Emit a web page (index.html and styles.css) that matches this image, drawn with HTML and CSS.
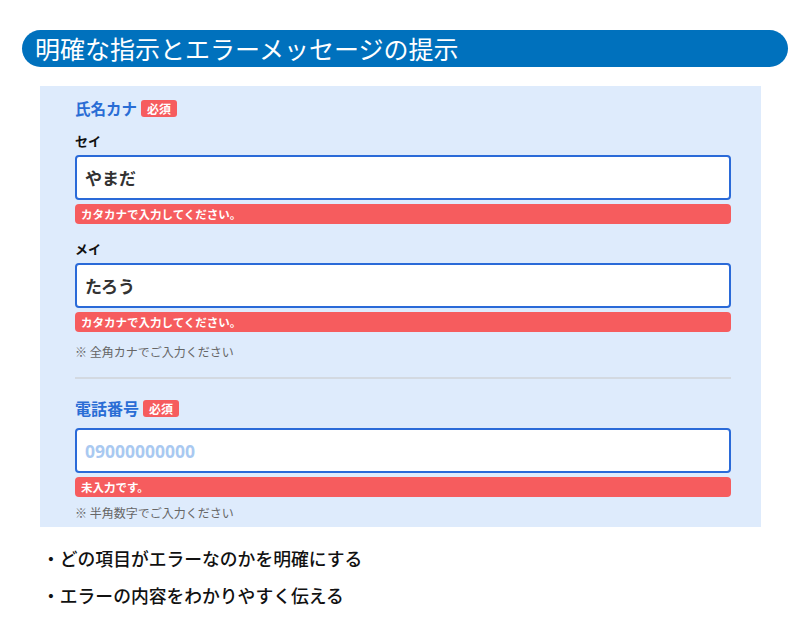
FILE: index.html
```html
<!DOCTYPE html>
<html lang="ja">

<head>
    <meta charset="UTF-8">
    <meta name="viewport" content="width=device-width, initial-scale=1.0">
    <title>明確な指示とエラーメッセージの提示</title>
    <link rel="stylesheet" href="styles.css">
</head>

<body>
    <h1 class="title">明確な指示とエラーメッセージの提示</h1>

    <div class="form-panel">
        <!-- 氏名カナ -->
        <div class="group-label">
            <span>氏名カナ</span>
            <span class="badge">必須</span>
        </div>

        <div class="sub-label first">セイ</div>
        <input class="field" type="text" value="やまだ" title="sei">
        <div class="error">カタカナで入力してください。</div>

        <div class="sub-label">メイ</div>
        <input class="field" type="text" value="たろう" title="mei">
        <div class="error">カタカナで入力してください。</div>

        <p class="note">※ 全角カナでご入力ください</p>

        <hr class="divider">

        <!-- 電話番号 -->
        <div class="group-label tel">
            <span>電話番号</span>
            <span class="badge">必須</span>
        </div>
        <input class="field num" type="text" placeholder="09000000000" title="tel">
        <div class="error">未入力です。</div>
        <p class="note last">※ 半角数字でご入力ください</p>
    </div>

    <ul class="points">
        <li>・どの項目がエラーなのかを明確にする</li>
        <li>・エラーの内容をわかりやすく伝える</li>
    </ul>
</body>

</html>
```

FILE: styles.css
```css
:root {
    font-family: 'Noto Sans CJK JP', 'Noto Sans', sans-serif;
}
body {
    margin: 0;
    background-color: #fff;
    color: #111;
}
.title {
    margin: 30px 13px 0 22px;
    height: 37px;
    padding-left: 13px;
    border-radius: 19px;
    background-color: #0071bd;
    color: #fff;
    font-size: 25px;
    font-weight: 400;
    line-height: 37px;
    white-space: nowrap;
}
.form-panel {
    width: 656px;
    margin: 19px 0 0 40px;
    padding: 12px 30px 4px 35px;
    background-color: #deebfc;
}
.group-label {
    display: flex;
    align-items: center;
    gap: 4px;
    height: 20px;
    color: #2a6dd5;
    font-size: 15.5px;
    font-weight: 700;
}
.group-label.tel {
    margin-top: 19px;
    font-size: 16px;
}
.badge {
    display: inline-block;
    height: 17px;
    padding: 0 6px;
    border-radius: 3px;
    background-color: #f65c5e;
    color: #fff;
    font-size: 12px;
    line-height: 17px;
}
.sub-label {
    margin-top: 15px;
    height: 20px;
    font-size: 13px;
    font-weight: 700;
    line-height: 20px;
}
.sub-label.first {
    margin-top: 13px;
}
.field {
    display: block;
    box-sizing: border-box;
    width: 100%;
    height: 45px;
    margin-top: 4px;
    padding: 0 8px;
    border: 2px solid #2a6ad8;
    border-radius: 4px;
    background-color: #fff;
    color: #333;
    font-family: inherit;
    font-size: 17px;
    font-weight: 700;
    outline: none;
}
.field.num {
    margin-top: 10px;
    font-family: 'Noto Sans', sans-serif;
    font-size: 17.5px;
}
.field::placeholder {
    color: #a9c9f1;
}
.error {
    height: 20px;
    margin-top: 4px;
    padding-left: 6px;
    border-radius: 4px;
    background-color: #f65c5e;
    color: #fff;
    font-size: 11.5px;
    font-weight: 700;
    line-height: 20px;
}
.note {
    margin: 10px 0 0;
    height: 20px;
    color: #666;
    font-size: 12px;
    line-height: 20px;
}
.note.last {
    margin-top: 6px;
}
.divider {
    margin: 15px 0 0;
    height: 2px;
    border: none;
    background-color: #d3d9e1;
}
.points {
    margin: 13px 0 0 42px;
    padding: 0;
    list-style: none;
    font-size: 17.8px;
    font-weight: 500;
    line-height: 37px;
}
```
